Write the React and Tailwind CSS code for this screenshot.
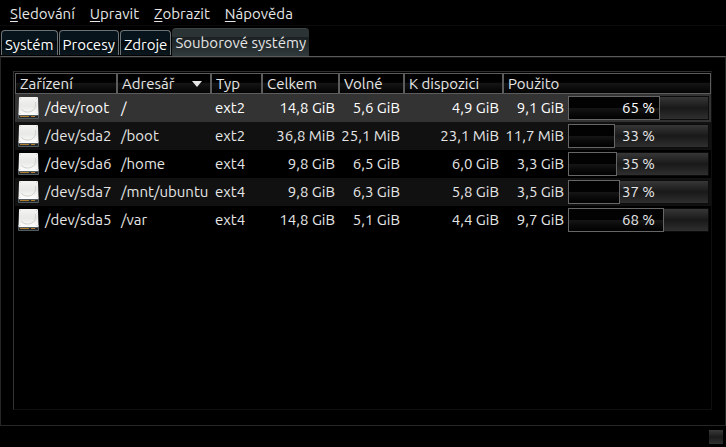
import React, { useState } from "react";

const menus = ["Sledování", "Upravit", "Zobrazit", "Nápověda"];
const tabs = ["Systém", "Procesy", "Zdroje", "Souborové systémy"];

const columns = [
  { label: "Zařízení", width: "w-[101px]" },
  { label: "Adresář", width: "w-[94px]", sorted: true },
  { label: "Typ", width: "w-[51px]" },
  { label: "Celkem", width: "w-[77px]" },
  { label: "Volné", width: "w-[65px]" },
  { label: "K dispozici", width: "w-[99px]" },
  { label: "Použito", width: "" },
];

const disks = [
  { device: "/dev/root", dir: "/", type: "ext2", total: "14,8 GiB", free: "5,6 GiB", available: "4,9 GiB", used: "9,1 GiB", percent: 65 },
  { device: "/dev/sda2", dir: "/boot", type: "ext2", total: "36,8 MiB", free: "25,1 MiB", available: "23,1 MiB", used: "11,7 MiB", percent: 33 },
  { device: "/dev/sda6", dir: "/home", type: "ext4", total: "9,8 GiB", free: "6,5 GiB", available: "6,0 GiB", used: "3,3 GiB", percent: 35 },
  { device: "/dev/sda7", dir: "/mnt/ubuntu", type: "ext4", total: "9,8 GiB", free: "6,3 GiB", available: "5,8 GiB", used: "3,5 GiB", percent: 37 },
  { device: "/dev/sda5", dir: "/var", type: "ext4", total: "14,8 GiB", free: "5,1 GiB", available: "4,4 GiB", used: "9,7 GiB", percent: 68 },
];

const DiskIcon = () => (
  <svg viewBox="0 0 22 22" className="h-[22px] w-[22px] shrink-0" aria-hidden="true">
    <defs>
      <linearGradient id="lid" x1="0" y1="0" x2="0" y2="1">
        <stop offset="0" stopColor="#f4f4f2" />
        <stop offset="0.5" stopColor="#e8e8e6" />
        <stop offset="1" stopColor="#ffffff" />
      </linearGradient>
    </defs>
    <path d="M0 16 H21 V21 Q21 22 20 22 H1 Q0 22 0 21 Z" fill="#555c5f" />
    <rect x="1" y="19" width="19" height="2" fill="#23282a" />
    <path d="M2 19h9v1h-9z M13 19h4v1h-4z" fill="#b07c30" />
    <path d="M1 1 Q1 0 2 0 H19 Q20 0 20 1 L20.5 17 Q20.5 18 19.5 18 H1.5 Q0.5 18 0.5 17 Z" fill="url(#lid)" />
    <path d="M17.5 5 C18.500 10.500 15.500 14.500 10.500 15 C7 15.300 4.500 14 3.500 12" fill="none" stroke="#cdcdca" strokeWidth="0.9" />
    <path d="M2 1h1v1h-1z M18 1h1v1h-1z M1.500 16h1v1h-1z M18.500 16h1v1h-1z" fill="#cfcfcc" />
  </svg>
);

const UsageBar = ({ percent }) => (
  <div
    role="progressbar"
    aria-valuenow={percent}
    aria-valuemin={0}
    aria-valuemax={100}
    className="relative h-6 flex-1"
  >
    <div className="h-full border border-[#0c0c0c] bg-linear-to-b from-[#373737] via-[#191919] via-50% to-[#2f2f2f]"></div>
    <div
      className="absolute inset-y-0 left-0 border border-[#666] bg-linear-to-b from-[#020202] from-50% via-[#161616] via-50% to-[#020202]"
      style={{ width: `${percent}%` }}
    ></div>
    <span className="absolute inset-0 flex items-center justify-center">{percent} %</span>
  </div>
);

export default function App() {
  const [activeTab, setActiveTab] = useState("Souborové systémy");
  const [selected, setSelected] = useState("/dev/root");

  return (
    <div className="flex min-h-screen flex-col bg-black font-['Ubuntu','Noto_Sans',sans-serif] text-[15px] leading-5 text-[#e6e6e6]">
      <nav className="flex h-[26px] items-center gap-[15px] border-b border-[#0b0b0b] px-[10px] pt-[3px]">
        {menus.map((menu) => (
          <button key={menu} type="button">
            <span className="underline underline-offset-2">{menu[0]}</span>
            {menu.slice(1)}
          </button>
        ))}
      </nav>

      <div role="tablist" className="flex h-[30px] items-end gap-px px-px">
        {tabs.map((tab) => (
          <button
            key={tab}
            type="button"
            role="tab"
            aria-selected={tab === activeTab}
            onClick={() => setActiveTab(tab)}
            className={
              tab === activeTab
                ? "h-7 rounded-t border-t border-[#3c4446] bg-linear-to-b from-[#2c3335] from-30% via-[#1b2123] via-30% to-[#30393b] px-[3px]"
                : "mb-px h-[25px] rounded-t border border-b-0 border-[#6c7478] bg-linear-to-b from-[#07141b] from-40% via-[#02080c] via-40% to-[#0b171e] px-[3px] pt-1 text-white"
            }
          >
            {tab}
          </button>
        ))}
      </div>

      <main className="flex flex-1 flex-col border border-[#262626] border-t-[#5a5a5a] px-[13px] pt-[14px] pb-[15px] pl-3 inset-shadow-[0_1px_0_#161616]">
        <div className="flex-1 border border-[#0f0f0f] border-t-[#2e2e2e] border-l-[#333] pt-px pl-px">
          <table className="w-full table-fixed border-separate border-spacing-0">
            <thead>
              <tr className="bg-linear-to-b from-black from-40% via-[#151515] via-50% to-[#030303]">
                {columns.map((col) => (
                  <th
                    key={col.label}
                    scope="col"
                    className={`${col.width} border-y border-l-2 border-[#5c5c5c] p-0 pl-1 text-left font-normal first:border-l last:border-r`}
                  >
                    <div className="flex h-[19px] items-center justify-between pr-2">
                      <span className="whitespace-nowrap">{col.label}</span>
                      {col.sorted && (
                        <svg viewBox="0 0 10 6" className="h-[6px] w-[10px]" aria-hidden="true">
                          <path d="M0 0h10L5 6z" fill="#e6e6e6" />
                        </svg>
                      )}
                    </div>
                  </th>
                ))}
              </tr>
            </thead>
            <tbody>
              {disks.map((disk) => (
                <tr
                  key={disk.device}
                  onClick={() => setSelected(disk.device)}
                  className={`h-7 whitespace-nowrap ${disk.device === selected ? "bg-[#333] text-white" : "even:bg-[#111]"}`}
                >
                  <td className="p-0 pl-[3px]">
                    <div className="flex items-center gap-[5px]">
                      <DiskIcon />
                      {disk.device}
                    </div>
                  </td>
                  <td className="p-0 pl-[5px]">{disk.dir}</td>
                  <td className="p-0 pl-[5px]">{disk.type}</td>
                  <td className="p-0 pr-[3px] text-right">{disk.total}</td>
                  <td className="p-0 pr-[3px] text-right">{disk.free}</td>
                  <td className="p-0 pr-[3px] text-right">{disk.available}</td>
                  <td className="p-0 pr-[2px]">
                    <div className="flex items-center gap-1">
                      <span className="w-[62px] text-right">{disk.used}</span>
                      <UsageBar percent={disk.percent} />
                    </div>
                  </td>
                </tr>
              ))}
            </tbody>
          </table>
        </div>
      </main>

      <footer className="flex h-[21px] items-start justify-end px-[3px] pt-1">
        <div className="h-[14px] w-[14px] bg-linear-to-b from-[#3a3a3a] via-[#1c1c1c] to-[#303030]"></div>
      </footer>
    </div>
  );
}
